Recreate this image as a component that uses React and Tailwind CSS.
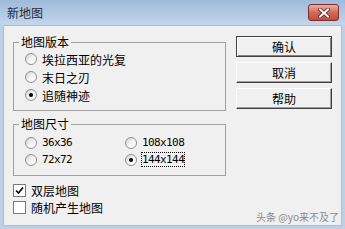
const cjk = { fontFamily: '"Noto Sans CJK SC", "Noto Sans", sans-serif' };

const Radio = ({ checked = false }) => (
  <span className="flex items-center justify-center w-[12px] h-[12px] shrink-0 rounded-full border border-[#8e8f8f] bg-gradient-to-br from-[#cfcfcf] via-[#f4f4f4] to-white">
    {checked && <span className="w-[4px] h-[4px] rounded-full bg-black"></span>}
  </span>
);

const RadioItem = ({ label, checked, focused, mono, height = 'h-[18px]' }) => (
  <div className={`flex items-center ${height}`}>
    <Radio checked={checked} />
    <span
      className={`ml-[4px] border leading-[13px] ${focused ? 'border-dotted border-black' : 'border-transparent'} ${mono ? 'text-[11px] tracking-[-0.6px]' : 'text-[12px]'}`}
      style={mono ? { fontFamily: '"DejaVu Sans Mono", "Liberation Mono", monospace' } : undefined}
    >
      {label}
    </span>
  </div>
);

const CheckItem = ({ label, checked }) => (
  <div className="flex items-center h-[17px]">
    <span className="flex items-center justify-center w-[13px] h-[13px] shrink-0 border border-[#7a7a7a] bg-white">
      {checked && (
        <svg width="9" height="9" viewBox="0 0 9 9">
          <path d="M1 4.5 L3.5 7 L8 1.5" fill="none" stroke="#000" strokeWidth="1.6" />
        </svg>
      )}
    </span>
    <span className="ml-[5px] text-[12px] leading-[14px]">{label}</span>
  </div>
);

const GroupBox = ({ title, children, className = '' }) => (
  <fieldset className={`border border-[#a0a0a0] p-0 m-0 ${className}`}>
    <legend className="ml-[5px] px-[2px] text-[12px] leading-[14px]">{title}</legend>
    {children}
  </fieldset>
);

const Button = ({ label, primary }) => (
  <button
    className={`w-[96px] h-[21px] bg-[#f0f0f0] text-[12px] leading-[14px] text-black flex items-center justify-center ${
      primary
        ? 'border border-[#404040] shadow-[inset_1px_1px_0_#fff,inset_-1px_-1px_0_#808080]'
        : 'border border-t-white border-l-white border-b-[#404040] border-r-[#404040] shadow-[inset_-1px_-1px_0_#a0a0a0]'
    }`}
  >
    {label}
  </button>
);

export default function App() {
  return (
    <div className="w-[345px] h-[229px] bg-[#bcd1e8] flex flex-col relative text-black" style={cjk}>
      <div className="h-[25px] shrink-0 flex items-center justify-between bg-gradient-to-b from-[#9fbad9] to-[#c3d6ec] pl-[7px] pr-[6px]">
        <span className="text-[12px] leading-[14px] text-[#1b2b3e]">新地图</span>
        <div className="w-[31px] h-[17px] rounded-[3px] border border-[#7c2f28] bg-gradient-to-b from-[#eab0a3] via-[#d26a5c] to-[#c44b3d] flex items-center justify-center">
          <svg width="12" height="10" viewBox="0 0 12 10">
            <path d="M2 1.5 L10 8.5 M10 1.5 L2 8.5" stroke="#5a1d18" strokeWidth="3.6" strokeLinecap="square" />
            <path d="M2 1.5 L10 8.5 M10 1.5 L2 8.5" stroke="#fff" strokeWidth="2" strokeLinecap="square" />
          </svg>
        </div>
      </div>
      <div className="flex-1 mx-[3px] mb-[3px] border border-[#a9bfd8] bg-[#f0f0f0] flex">
        <div className="flex flex-col pl-[9px] pt-[9px] w-[222px]">
          <GroupBox title="地图版本">
            <div className="pl-[11px] pt-[1px] pb-[6px]">
              <RadioItem label="埃拉西亚的光复" />
              <RadioItem label="末日之刃" />
              <RadioItem label="追随神迹" checked />
            </div>
          </GroupBox>
          <GroupBox title="地图尺寸" className="mt-[6px]">
            <div className="pl-[11px] pt-[3px] pb-[7px] grid grid-cols-[100px_1fr]">
              <RadioItem label="36x36" mono height="h-[17px]" />
              <RadioItem label="108x108" mono height="h-[17px]" />
              <RadioItem label="72x72" mono height="h-[17px]" />
              <RadioItem label="144x144" mono checked focused height="h-[17px]" />
            </div>
          </GroupBox>
          <div className="mt-[6px] flex flex-col">
            <CheckItem label="双层地图" checked />
            <CheckItem label="随机产生地图" />
          </div>
        </div>
        <div className="flex flex-col gap-[5px] pt-[10px] ml-[10px]">
          <Button label="确认" primary />
          <Button label="取消" />
          <Button label="帮助" />
        </div>
      </div>
      <span className="absolute right-[6px] bottom-[6px] text-[10px] leading-[12px] text-[#8a8a8a]">头条 @yo来不及了</span>
    </div>
  );
}
